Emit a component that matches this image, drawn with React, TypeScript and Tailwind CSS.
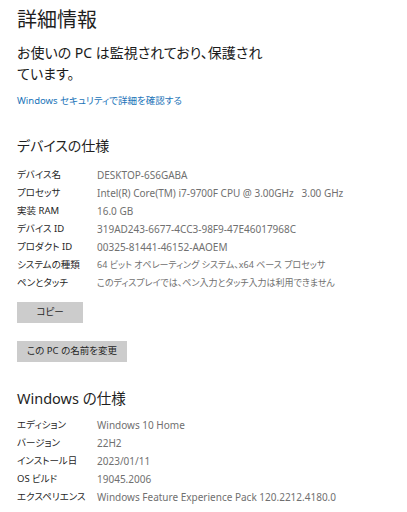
const font = "font-['Noto_Sans','Noto_Sans_CJK_JP',sans-serif] [font-feature-settings:'palt']";

// [label, value, value mostly Japanese?]
const deviceSpecs: [string, string, boolean?][] = [
  ['デバイス名', 'DESKTOP-6S6GABA'],
  ['プロセッサ', 'Intel(R) Core(TM) i7-9700F CPU @ 3.00GHz   3.00 GHz'],
  ['実装 RAM', '16.0 GB'],
  ['デバイス ID', '319AD243-6677-4CC3-98F9-47E46017968C'],
  ['プロダクト ID', '00325-81441-46152-AAOEM'],
  ['システムの種類', '64 ビット オペレーティング システム、x64 ベース プロセッサ', true],
  ['ペンとタッチ', 'このディスプレイでは、ペン入力とタッチ入力は利用できません', true],
];

const windowsSpecs: [string, string, boolean?][] = [
  ['エディション', 'Windows 10 Home'],
  ['バージョン', '22H2'],
  ['インストール日', '2023/01/11'],
  ['OS ビルド', '19045.2006'],
  ['エクスペリエンス', 'Windows Feature Experience Pack 120.2212.4180.0'],
];

function SpecList({ rows }: { rows: [string, string, boolean?][] }) {
  return (
    <div className="flex flex-col">
      {rows.map(([label, value, jp]) => (
        <div key={label} className="flex h-[18px] items-center whitespace-pre leading-[18px]">
          <span className="w-[80px] shrink-0 text-[9.5px] text-[#1f1f1f]">{label}</span>
          <span className={jp ? 'text-[9px] text-[#707070]' : 'text-[10px] text-[#707070]'}>{value}</span>
        </div>
      ))}
    </div>
  );
}

export default function App() {
  return (
    <div className={`${font} w-[407px] h-[512px] bg-white pl-[17px] pt-[6px] overflow-hidden`}>
      <h1 className="text-[20px] leading-[28px] text-[#1f1f1f]">詳細情報</h1>

      <p className="mt-[8px] text-[14px] leading-[21px] text-[#1a1a1a]">
        お使いの PC は監視されており、保護され
        <br />
        ています。
      </p>

      <a className="mt-[10px] block text-[9.5px] leading-[14px] text-[#1a73b8]">
        Windows セキュリティで詳細を確認する
      </a>

      <h2 className="mt-[27px] text-[14px] leading-[21px] text-[#1f1f1f]">デバイスの仕様</h2>

      <div className="mt-[10px]">
        <SpecList rows={deviceSpecs} />
      </div>

      <button className="mt-[10px] block w-[66px] h-[21px] bg-[#cccccc] text-[9.5px] text-[#262626]">
        コピー
      </button>

      <button className="mt-[18px] block w-[110px] h-[21px] bg-[#cccccc] text-[9.5px] text-[#262626]">
        この PC の名前を変更
      </button>

      <h2 className="mt-[25px] text-[14.5px] leading-[22px] text-[#1f1f1f]">Windows の仕様</h2>

      <div className="mt-[7px]">
        <SpecList rows={windowsSpecs} />
      </div>
    </div>
  );
}
